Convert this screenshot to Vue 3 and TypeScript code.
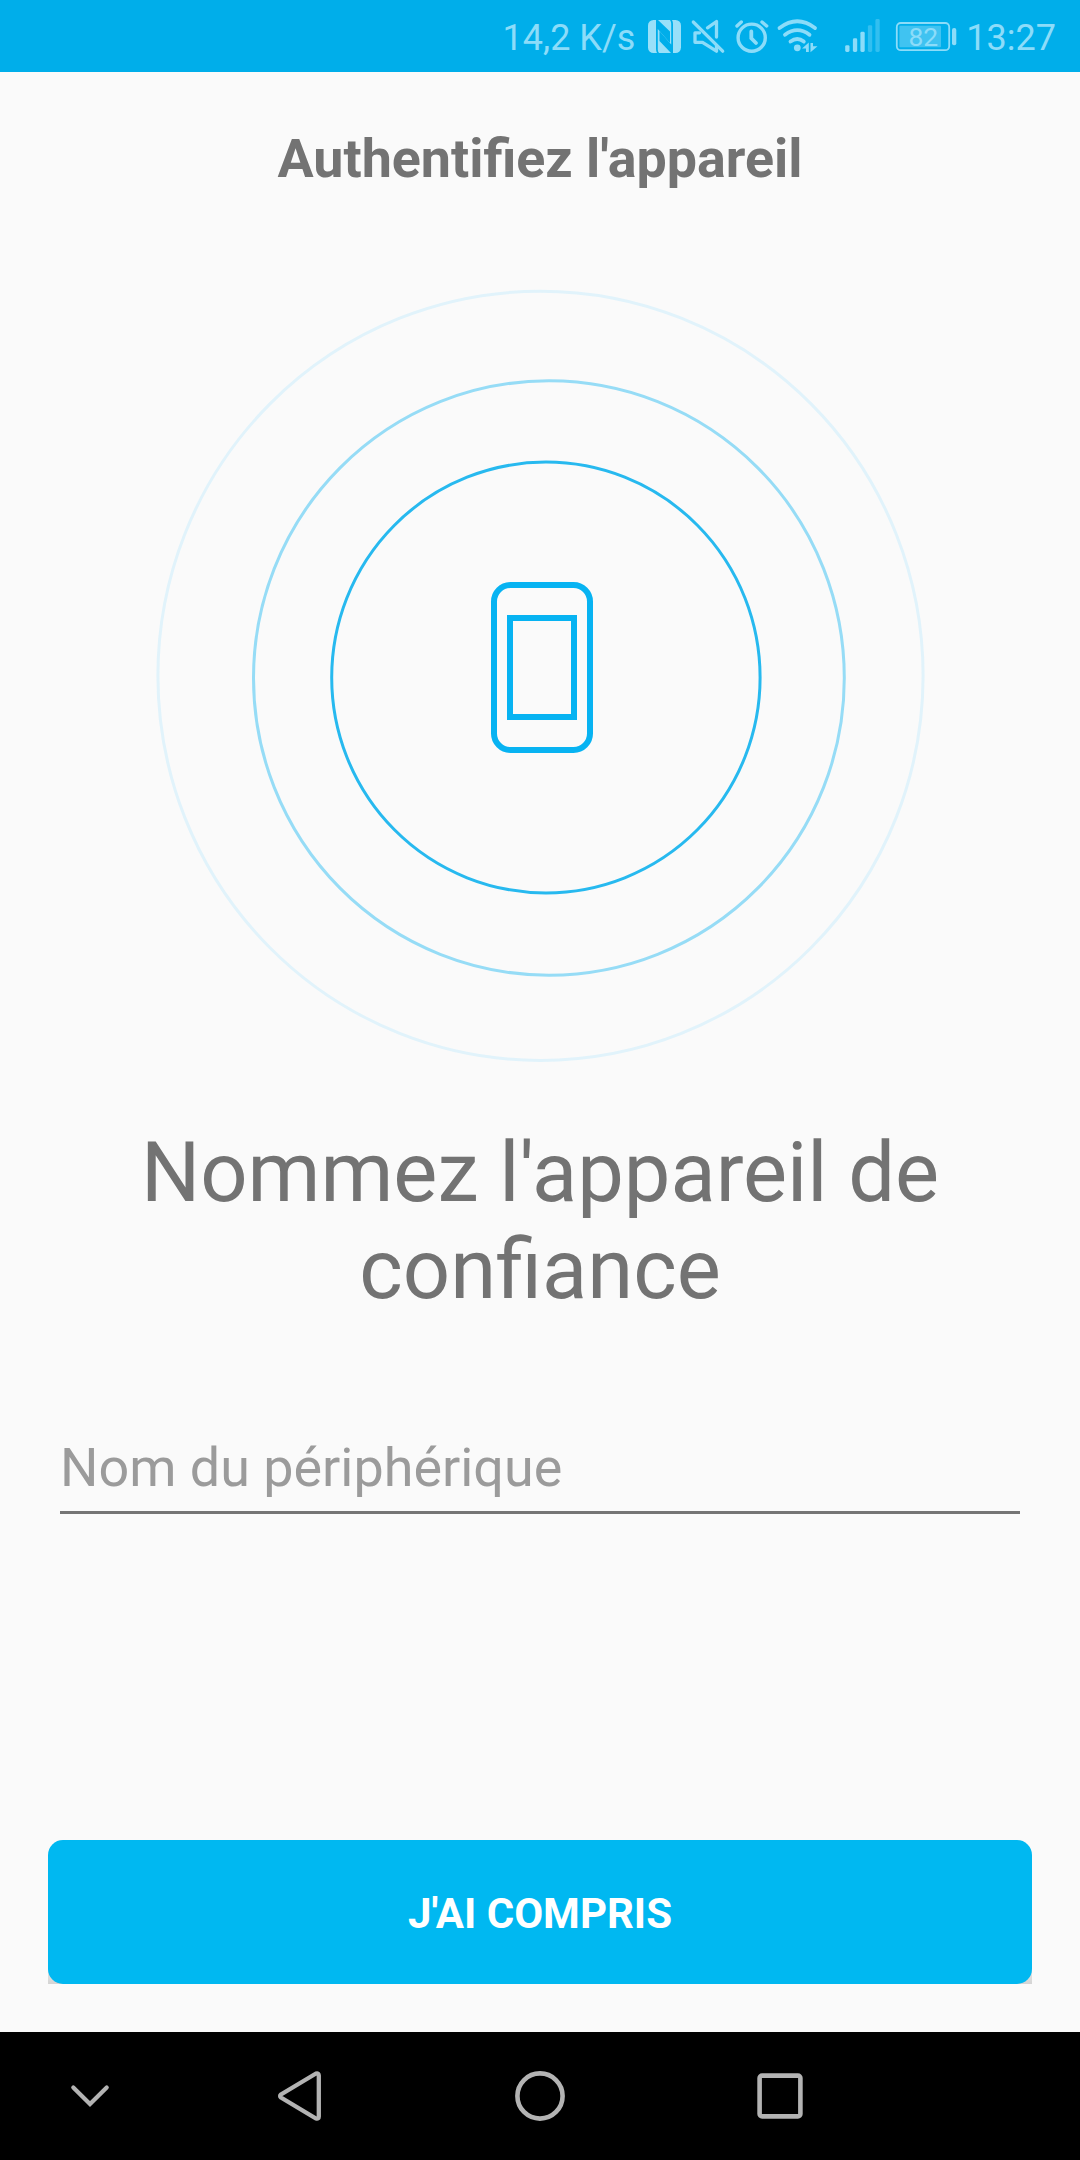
<script setup lang="ts">
import { ref } from 'vue'

interface Ring { cx: number; cy: number; rx: number; ry: number; color: string }
interface Bar { x: number; top: number; dim: boolean }

const speed = ref('14,2 K/s')
const time = ref('13:27')
const battery = ref(82)

const rings: Ring[] = [
  { cx: 540.5, cy: 675.8, rx: 382.6, ry: 384.6, color: '#e1f3fb' },
  { cx: 548.9, cy: 678, rx: 295.4, ry: 297.2, color: '#96dcf6' },
  { cx: 545.9, cy: 677.5, rx: 214.2, ry: 215.4, color: '#27b9ef' },
]

const bars: Bar[] = [
  { x: 847.3, top: 45.2, dim: false },
  { x: 855, top: 38.3, dim: false },
  { x: 862.5, top: 31.8, dim: false },
  { x: 870, top: 25.2, dim: true },
  { x: 877.5, top: 19, dim: true },
]
</script>

<template>
  <div class="screen">
    <header class="status">
      <span class="speed">{{ speed }}</span>
      <svg class="nfc" width="34" height="72" viewBox="648 0 34 72">
        <rect x="648" y="20" width="33" height="33" rx="5.5" fill="#99e0f9" />
        <path d="M656 20H658L670 31.5V43L657.8 29V49.5Q657.8 51.5 659 53H657Q656 51.5 656 49V24Z" fill="#00aeea" />
        <path d="M673 53H671L659.5 41V31L671.2 44.5V23.5Q671.2 21.5 670 20H672Q673 21.5 673 24V49Z" fill="#00aeea" />
      </svg>
      <svg class="mute" width="36" height="72" viewBox="690 0 36 72">
        <g fill="none" stroke="#8cdcf9" stroke-width="3.3" stroke-linecap="round" stroke-linejoin="round">
          <path d="M693.3 22L722.7 51.2" />
          <path d="M699.5 32.8H695V42.3H702.5L716.5 51.2V45.5" />
          <path d="M707.5 27.8L716.5 21.5V37" />
        </g>
      </svg>
      <svg class="alarm" width="36" height="72" viewBox="734 0 36 72">
        <g fill="none" stroke="#8cdcf9" stroke-width="3.4" stroke-linecap="round">
          <circle cx="751.7" cy="37.7" r="13.6" />
          <path d="M751.3 31.5V38.3L756 43" stroke-width="3.8" />
          <path d="M737 26L741.3 22M762 22L766.7 26" />
        </g>
      </svg>
      <svg class="wifi" width="44" height="72" viewBox="776 0 44 72">
        <g fill="none" stroke="#8cdcf9" stroke-width="3.8" stroke-linecap="round">
          <path d="M779.5 28Q797.3 14.5 815 28" />
          <path d="M785 34.8Q797.3 25.5 809.5 34.8" />
          <path d="M790.5 41.5Q797.3 36.5 803.8 41.5" />
        </g>
        <circle cx="797.3" cy="47.8" r="3.4" fill="#8cdcf9" />
        <path d="M802 48.6L808.8 42.5V52H806V48.6ZM810.5 43H813V46.3H817.5L810.5 52.3Z" fill="#8cdcf9" />
      </svg>
      <svg class="signal" width="38" height="72" viewBox="844 0 38 72">
        <rect v-for="b in bars" :key="b.x" :x="b.x - 2.1" :y="b.top" width="4.3" :height="52 - b.top" rx="1.4" :fill="b.dim ? '#32bff0' : '#8cdcf9'" />
      </svg>
      <span class="battery">
        <svg width="62" height="72" viewBox="895 0 62 72">
          <rect x="896.8" y="23" width="52.4" height="27.2" rx="4" fill="none" stroke="#8cdcf9" stroke-width="1.8" />
          <rect x="899.4" y="25.8" width="41.6" height="21.4" rx="1" fill="#40c3f1" />
          <rect x="952" y="28" width="4.3" height="17.3" rx="2" fill="#8cdcf9" />
        </svg>
        <span class="level">{{ battery }}</span>
      </span>
      <span class="time">{{ time }}</span>
    </header>

    <main class="content">
      <h1 class="title">Authentifiez l'appareil</h1>
      <svg class="rings" width="780" height="790" viewBox="150 281 780 790">
        <ellipse v-for="r in rings" :key="r.rx" :cx="r.cx" :cy="r.cy" :rx="r.rx" :ry="r.ry" fill="none" :stroke="r.color" stroke-width="3" />
        <g fill="none" stroke="#07b3f2" stroke-width="6">
          <rect x="494" y="585" width="96" height="165" rx="16.5" />
          <rect x="510" y="618" width="64" height="99" />
        </g>
      </svg>
      <h2 class="heading">Nommez l'appareil de confiance</h2>
      <div class="field"><span>Nom du périphérique</span></div>
      <div class="action">
        <button type="button">J'AI COMPRIS</button>
      </div>
    </main>

    <nav class="navbar">
      <svg width="40" height="128" viewBox="70 2032 40 128">
        <path d="M73.3 2087.5L90 2104L106.7 2087.5" fill="none" stroke="#b3b3b3" stroke-width="4.2" stroke-linecap="round" />
      </svg>
      <svg class="back" width="46" height="128" viewBox="277 2032 46 128">
        <path d="M316 2073.5L281 2094.4Q279.2 2096 281 2097.6L316 2118.5Q318.8 2119.2 318.8 2116.5V2075.5Q318.8 2072.8 316 2073.5Z" fill="none" stroke="#b3b3b3" stroke-width="4.3" />
      </svg>
      <svg class="home" width="50" height="128" viewBox="515 2032 50 128">
        <circle cx="540" cy="2096" r="22.6" fill="none" stroke="#b3b3b3" stroke-width="4.6" />
      </svg>
      <svg class="recent" width="46" height="128" viewBox="757 2032 46 128">
        <rect x="759.6" y="2075.6" width="40.8" height="40.8" rx="2.5" fill="none" stroke="#b3b3b3" stroke-width="4.6" />
      </svg>
    </nav>
  </div>
</template>

<style>
body {
  margin: 0;
}
</style>

<style scoped>
.screen {
  width: 1080px;
  height: 2160px;
  display: flex;
  flex-direction: column;
  overflow: hidden;
  background: #fafafa;
  font-family: Roboto, sans-serif;
}
svg {
  display: block;
  flex: none;
}
.status {
  flex: none;
  height: 72px;
  display: flex;
  justify-content: flex-end;
  padding-right: 24px;
  background: #00aeea;
  color: #8cdcf9;
}
.speed,
.time {
  font-size: 36px;
  line-height: 76px;
  white-space: nowrap;
}
.speed {
  margin-right: 13px;
}
.nfc,
.mute {
  margin-right: 8px;
}
.alarm {
  margin-right: 6px;
}
.wifi {
  margin-right: 24px;
}
.signal {
  margin-right: 13px;
}
.battery {
  position: relative;
  margin-right: 9px;
}
.level {
  position: absolute;
  left: 0;
  top: 0;
  width: 56px;
  text-align: center;
  font-size: 26.5px;
  line-height: 74px;
}
.content {
  flex: 1;
  display: flex;
  flex-direction: column;
  align-items: center;
}
.title {
  margin: 55px 0 0;
  font-size: 53.8px;
  line-height: 64px;
  font-weight: 700;
  color: #737373;
}
.rings {
  margin-top: 90px;
}
.heading {
  width: 900px;
  margin: 53px 0 0;
  font-size: 83.1px;
  line-height: 97px;
  font-weight: 400;
  text-align: center;
  color: #737373;
}
.field {
  width: 960px;
  height: 75px;
  margin-top: 118px;
  border-bottom: 3px solid #757575;
  font-size: 53.9px;
  line-height: 64px;
  color: #9b9b9b;
}
.action {
  width: 984px;
  margin-top: 326px;
  background: linear-gradient(#fafafa 80%, #d4d4d4);
}
.action button {
  display: block;
  width: 100%;
  height: 144px;
  padding: 3px 0 0;
  border: 0;
  border-radius: 15px;
  background: #00b8f1;
  color: #fff;
  font: 700 42px/50px Roboto, sans-serif;
}
.navbar {
  flex: none;
  height: 128px;
  display: flex;
  padding-left: 70px;
  background: #000;
}
.back {
  margin-left: 167px;
}
.home {
  margin-left: 192px;
}
.recent {
  margin-left: 192px;
}
</style>
